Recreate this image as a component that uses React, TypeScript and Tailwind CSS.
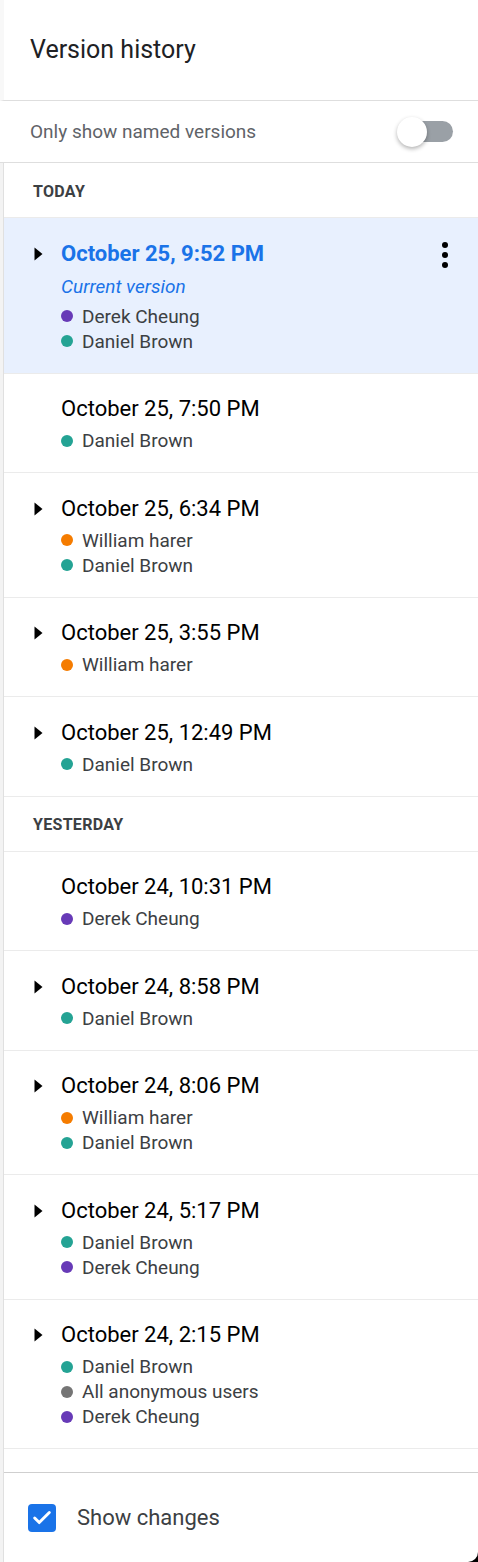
import { Check } from 'lucide-react';

type Author = { name: string; color: string };

interface Version {
    time: string;
    authors: Author[];
    expandable: boolean;
    current?: boolean;
}

const derek = { name: 'Derek Cheung', color: 'bg-[#673ab7]' };
const daniel = { name: 'Daniel Brown', color: 'bg-[#24a394]' };
const william = { name: 'William harer', color: 'bg-[#f57c00]' };
const anon = { name: 'All anonymous users', color: 'bg-[#757575]' };

const today: Version[] = [
    { time: 'October 25, 9:52 PM', authors: [derek, daniel], expandable: true, current: true },
    { time: 'October 25, 7:50 PM', authors: [daniel], expandable: false },
    { time: 'October 25, 6:34 PM', authors: [william, daniel], expandable: true },
    { time: 'October 25, 3:55 PM', authors: [william], expandable: true },
    { time: 'October 25, 12:49 PM', authors: [daniel], expandable: true },
];

const yesterday: Version[] = [
    { time: 'October 24, 10:31 PM', authors: [derek], expandable: false },
    { time: 'October 24, 8:58 PM', authors: [daniel], expandable: true },
    { time: 'October 24, 8:06 PM', authors: [william, daniel], expandable: true },
    { time: 'October 24, 5:17 PM', authors: [daniel, derek], expandable: true },
    { time: 'October 24, 2:15 PM', authors: [daniel, anon, derek], expandable: true },
];

const Caret = () => (
    <svg width="9" height="14" viewBox="0 0 9 14" className="block">
        <path d="M0.5 0.5 L8.5 7 L0.5 13.5 Z" fill="#000" />
    </svg>
);

const VersionRow = ({ v }: { v: Version }) => (
    <div
        className={`relative flex border-b border-[#ebebeb] pt-[21.5px] pb-[19px] ${v.current ? 'bg-[#e8f0fe]' : 'bg-white'}`}
    >
        <div className="w-[57px] shrink-0 flex justify-end pr-[18px] pt-[7px]">
            {v.expandable && <Caret />}
        </div>
        <div className="flex-1">
            <div
                className={`h-[28px] leading-[28px] text-[22px] ${v.current ? 'font-bold text-[#1a73e8]' : 'text-black'}`}
            >
                {v.time}
            </div>
            {v.current && (
                <div className="mt-[6px] h-[25px] leading-[25px] text-[19px] italic text-[#1a73e8]">Current version</div>
            )}
            <div className="mt-[5px]">
                {v.authors.map((a, i) => (
                    <div key={i} className="flex items-center h-[25px]">
                        <span className={`w-[12px] h-[12px] rounded-full ${a.color} mr-[9px]`} />
                        <span className="text-[19px] text-[#3c4043] leading-[25px]">{a.name}</span>
                    </div>
                ))}
            </div>
        </div>
        {v.current && (
            <div className="absolute right-[30px] top-[24px] flex flex-col items-center gap-[4px]">
                <span className="w-[6px] h-[6px] rounded-full bg-black" />
                <span className="w-[6px] h-[6px] rounded-full bg-black" />
                <span className="w-[6px] h-[6px] rounded-full bg-black" />
            </div>
        )}
    </div>
);

const SectionLabel = ({ label }: { label: string }) => (
    <div className="h-[55px] flex items-center pl-[29px] pt-[3px] border-b border-[#ebebeb] text-[16px] font-bold text-[#3c4043] tracking-[0.3px]">
        {label}
    </div>
);

export default function App() {
    return (
        <div className="w-[478px] h-[1562px] bg-black" style={{ fontFamily: 'Roboto, "Noto Sans", sans-serif' }}>
            <div className="w-full h-full bg-white rounded-br-[10px] overflow-hidden flex flex-col">
                <div className="h-[101px] flex items-center pl-[30px] border-b border-[#dedede] border-l-[4px] border-l-[#f8f8f8]">
                    <h1 className="text-[25px] text-[#202124] -ml-[4px]">Version history</h1>
                </div>
                <div className="h-[62px] flex items-center justify-between pl-[30px] pr-[25px] border-b border-[#dedede]">
                    <span className="text-[19px] text-[#5f6368] mt-[2px]">Only show named versions</span>
                    <div className="relative w-[56px] h-[30px] flex items-center">
                        <div className="absolute right-0 w-[42px] h-[21px] rounded-full bg-[#9aa0a6]" />
                        <div className="absolute left-0 w-[30px] h-[30px] rounded-full bg-white shadow-[0_2px_4px_rgba(0,0,0,0.3)]" />
                    </div>
                </div>
                <div className="flex-1 flex border-l-[3px] border-l-[#f3f3f3]">
                    <div className="w-px bg-[#e0e0e0]" />
                    <div className="flex-1 flex flex-col">
                        <div className="flex-1">
                            <SectionLabel label="TODAY" />
                            {today.map((v, i) => (
                                <VersionRow key={i} v={v} />
                            ))}
                            <SectionLabel label="YESTERDAY" />
                            {yesterday.map((v, i) => (
                                <VersionRow key={i} v={v} />
                            ))}
                        </div>
                        <div className="h-[90px] shrink-0 border-t border-[#cfcfcf] flex items-center pl-[24px]">
                            <div className="w-[28px] h-[28px] rounded-[4px] bg-[#1a73e8] flex items-center justify-center">
                                <Check className="w-[22px] h-[22px] text-white" strokeWidth={3.2} />
                            </div>
                            <span className="ml-[21px] text-[22px] text-[#3c4043]">Show changes</span>
                        </div>
                    </div>
                </div>
            </div>
        </div>
    );
}
